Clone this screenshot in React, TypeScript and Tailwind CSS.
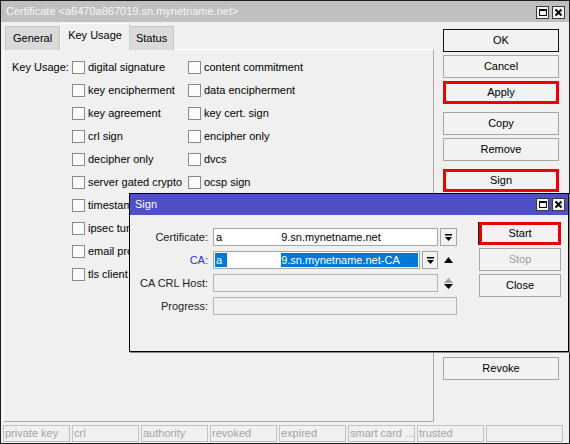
import React from "react";

const FONT = "font-['Liberation_Sans',Arial,sans-serif]";

const COL1 = [
  "digital signature",
  "key encipherment",
  "key agreement",
  "crl sign",
  "decipher only",
  "server gated crypto",
  "timestamp",
  "ipsec tunnel",
  "email protect",
  "tls client",
];

const COL2 = [
  "content commitment",
  "data encipherment",
  "key cert. sign",
  "encipher only",
  "dvcs",
  "ocsp sign",
];

const FLAGS = ["private key", "crl", "authority", "revoked", "expired", "smart card ...", "trusted", ""];

function TitleButtons() {
  return (
    <div className="flex gap-[3px]">
      <span className="w-[13px] h-[13px] border border-[#3a3a3a] bg-[#f4f4f4] flex items-center justify-center">
        <span className="w-[8px] h-[7px] border border-black border-t-2" />
      </span>
      <span className="w-[13px] h-[13px] border border-[#3a3a3a] bg-[#f4f4f4] flex items-center justify-center">
        <svg width="9" height="9" viewBox="0 0 9 9">
          <path d="M1.5 1.5 L7.5 7.5 M7.5 1.5 L1.5 7.5" stroke="#000" strokeWidth="2" />
        </svg>
      </span>
    </div>
  );
}

function Checkbox({ label }: { label: string }) {
  return (
    <div className="flex items-center gap-[3px] h-[23px] whitespace-nowrap">
      <span className="w-[13px] h-[13px] border border-[#8a8a8a] bg-[#fbfbfb] shrink-0" />
      <span>{label}</span>
    </div>
  );
}

function Btn({
  label = "",
  className = "",
  red = false,
  focus = false,
  disabled = false,
}: {
  label?: string;
  className?: string;
  red?: boolean;
  focus?: boolean;
  disabled?: boolean;
}) {
  return (
    <div
      className={[
        "h-[23px] flex items-center justify-center bg-[#f2f2f2]",
        red
          ? "border-[3px] border-[#ee0000]"
          : focus
          ? "border border-[#111]"
          : "border border-[#a5a5a5]",
        disabled ? "text-[#a0a0a0]" : "text-black",
        className,
      ].join(" ")}
    >
      {label}
    </div>
  );
}

function DropIcon() {
  return (
    <svg width="9" height="9" viewBox="0 0 9 9">
      <rect x="1" y="1" width="7" height="1.5" fill="#000" />
      <polygon points="1,4 8,4 4.5,8" fill="#000" />
    </svg>
  );
}

function DropBtn({ w = "w-[17px]" }: { w?: string }) {
  return (
    <span className={`${w} h-[18px] border border-[#a5a5a5] bg-[#f2f2f2] flex items-center justify-center shrink-0`}>
      <DropIcon />
    </span>
  );
}

function SignDialog() {
  return (
    <div className="absolute left-[128px] top-[192px] w-[440px] h-[159px] border border-black bg-[#f0f0f0] shadow-[1px_1px_0_#8a8a8a] flex flex-col">
      <div className="h-[21px] bg-[#4f4fc8] flex items-center justify-between pl-[5px] pr-[3px] text-white text-[11px]">
        <span>Sign</span>
        <TitleButtons />
      </div>
      <div className="flex">
        <div className="flex flex-col gap-[5px] pt-[13px]">
          <div className="flex items-center h-[18px]">
            <span className="w-[78px] text-right text-[#222]">Certificate:</span>
            <div className="ml-[5px] w-[244px] flex gap-[2px]">
              <div className="flex-1 h-[18px] border border-[#a5a5a5] bg-white flex items-center pl-[2px] whitespace-nowrap">
                <span>a</span>
                <span className="inline-block w-[59px]" />
                <span>9.sn.mynetname.net</span>
              </div>
              <DropBtn />
            </div>
          </div>
          <div className="flex items-center h-[18px]">
            <span className="w-[78px] text-right text-[#3030d8]">CA:</span>
            <div className="ml-[5px] w-[244px] flex gap-[2px] items-center">
              <div className="flex-1 h-[18px] border border-[#a5a5a5] bg-white p-px">
                <div className="h-full bg-[#0078d7] text-white flex items-center pl-px whitespace-nowrap">
                  <span>a</span>
                  <span className="inline-block w-[54px] h-full bg-white ml-[5px]" />
                  <span>9.sn.mynetname.net-CA</span>
                </div>
              </div>
              <DropBtn w="w-[16px]" />
              <span className="w-[17px] flex justify-center">
                <svg width="9" height="6" viewBox="0 0 9 6">
                  <polygon points="0,6 9,6 4.5,0" fill="#000" />
                </svg>
              </span>
            </div>
          </div>
          <div className="flex items-center h-[18px]">
            <span className="w-[78px] text-right text-[#222]">CA CRL Host:</span>
            <div className="ml-[5px] w-[244px] flex gap-[2px] items-center">
              <div className="flex-1 h-[18px] border border-[#b4b4b4] bg-[#f0f0f0]" />
              <span className="w-[17px] flex flex-col items-center gap-[1px]">
                <svg width="9" height="5" viewBox="0 0 9 5">
                  <polygon points="0,5 9,5 4.5,0" fill="#92a892" />
                </svg>
                <svg width="9" height="5" viewBox="0 0 9 5">
                  <polygon points="0,0 9,0 4.5,5" fill="#000" />
                </svg>
              </span>
            </div>
          </div>
          <div className="flex items-center h-[18px]">
            <span className="w-[78px] text-right text-[#222]">Progress:</span>
            <div className="ml-[5px] w-[244px] h-[18px] border border-[#b4b4b4] bg-[#f0f0f0]" />
          </div>
        </div>
        <div className="ml-[22px] w-[82px] flex flex-col gap-[3px] pt-[7px]">
          <Btn label="Start" red className="shadow-[-1px_0_0_#000]" />
          <Btn label="Stop" disabled />
          <Btn label="Close" />
        </div>
      </div>
    </div>
  );
}

export default function App() {
  return (
    <div className={`relative w-[570px] h-[444px] border border-[#1e1e1e] bg-[#f0f0f0] text-[11px] text-black ${FONT}`}>
      {/* title bar */}
      <div className="h-[21px] bg-[#c0c0c0] flex items-center justify-between pl-[5px] pr-[4px] text-[#f6f6f6] text-[11px]">
        <span>Certificate &lt;a6470a867019.sn.mynetname.net&gt;</span>
        <div className="pt-[1px]">
          <TitleButtons />
        </div>
      </div>

      <div className="flex h-[400px]">
        {/* tabs + panel */}
        <div className="ml-[2px] w-[431px] flex flex-col">
          <div className="h-[28px] flex items-end pl-[2px] relative z-10 -mb-px">
            <div className="h-[24px] px-[7px] bg-[#dadada] border border-b-0 border-[#c4c4c4] flex items-center">General</div>
            <div className="h-[27px] px-[7px] bg-[#f0f0f0] border border-b-0 border-[#d0d0d0] border-t-white border-l-white flex items-start pt-[3px]">Key Usage</div>
            <div className="h-[24px] px-[6px] bg-[#dadada] border border-b-0 border-l-0 border-[#c4c4c4] flex items-center">Status</div>
          </div>
          <div className="flex-1 border border-[#a8a8a8] border-t-white border-l-white">
            <div className="flex pl-[8px] pt-[6px]">
              <div className="w-[60px] h-[23px] flex items-center">Key Usage:</div>
              <div className="grid grid-cols-[116px_auto]">
                {COL1.map((l, i) => (
                  <React.Fragment key={l}>
                    <Checkbox label={l} />
                    {COL2[i] ? <Checkbox label={COL2[i]} /> : <div className="h-[23px]" />}
                  </React.Fragment>
                ))}
              </div>
            </div>
          </div>
        </div>

        {/* button column; the ones under the Sign window carry no text */}
        <div className="ml-[9px] w-[116px] flex flex-col pt-[7px]">
          <Btn label="OK" focus />
          <Btn label="Cancel" className="mt-[3px]" />
          <Btn label="Apply" red className="mt-[3px]" />
          <Btn label="Copy" className="mt-[8px]" />
          <Btn label="Remove" className="mt-[3px]" />
          <Btn label="Sign" red className="mt-[8px]" />
          <Btn className="mt-[7px]" />
          <Btn className="mt-[3px]" />
          <Btn className="mt-[3px]" />
          <Btn className="mt-[3px]" />
          <Btn className="mt-[3px]" />
          <Btn className="mt-[3px]" />
          <Btn label="Revoke" className="mt-[5px]" />
        </div>
      </div>

      {/* status flags */}
      <div className="flex gap-[2px] ml-[2px] mt-[3px]">
        {FLAGS.map((f, i) => (
          <div
            key={i}
            className={[
              "h-[17px] border border-[#c2c2c2] text-[#a4a4a4] flex items-center pl-px whitespace-nowrap overflow-hidden",
              i === FLAGS.length - 1 ? "w-[77px]" : "w-[67px]",
            ].join(" ")}
          >
            {f}
          </div>
        ))}
      </div>

      <SignDialog />
    </div>
  );
}
